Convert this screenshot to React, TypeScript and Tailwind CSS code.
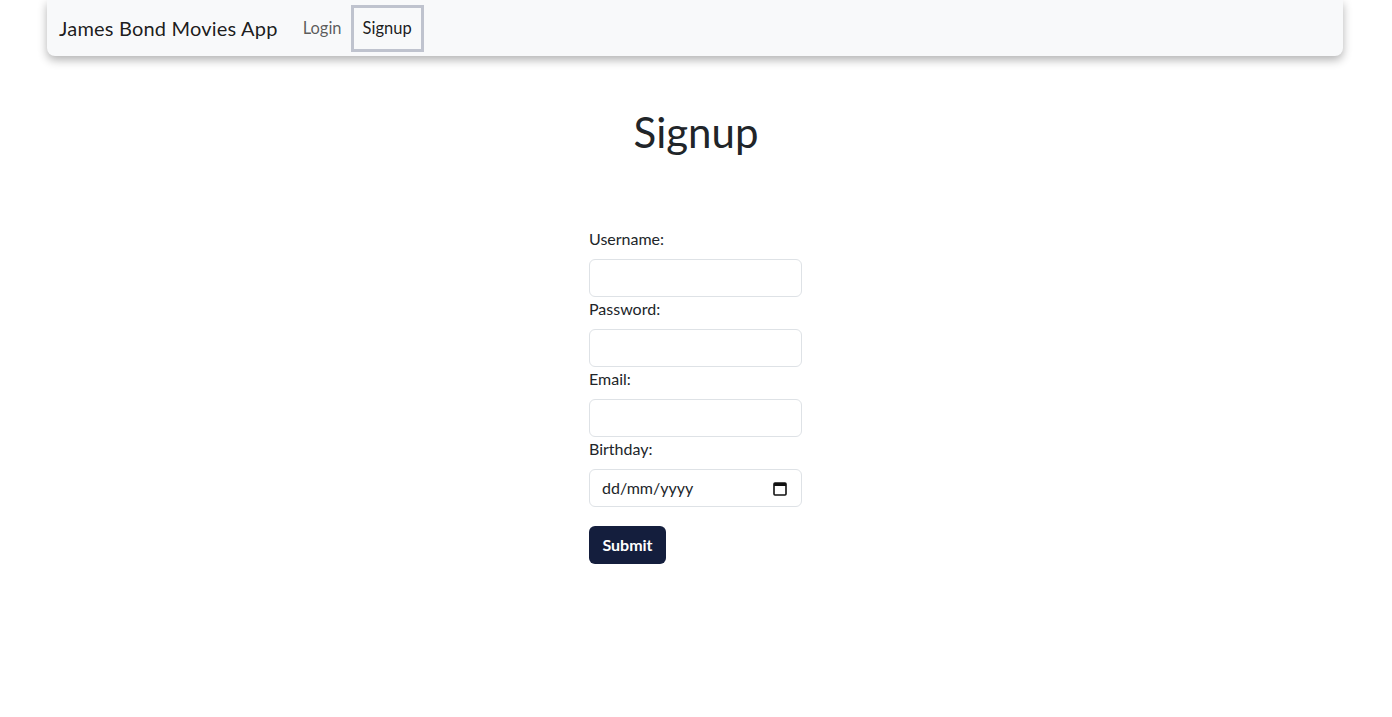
import React from "react";

const font = { fontFamily: "Lato, 'Noto Sans', sans-serif" };

function Field({ label, children }: { label: string; children: React.ReactNode }) {
  return (
    <div className="flex flex-col">
      <label className="mb-2 text-[16px] leading-6 text-[#212529]">{label}</label>
      {children}
    </div>
  );
}

function TextInput({ type = "text" }: { type?: string }) {
  return (
    <input
      type={type}
      className="h-[38px] w-full rounded-md border border-[#dee2e6] bg-white px-3 text-[16px] text-[#212529] outline-none"
    />
  );
}

export default function App() {
  return (
    <div className="min-h-screen bg-white text-[#212529]" style={font}>
      <nav className="ml-[47px] flex h-14 w-[1296px] items-center rounded-b-lg bg-[#f8f9fa] px-3 shadow-[0_4px_10px_rgba(0,0,0,0.3)]">
        <span className="mr-[25px] text-[20px] tracking-[0.2px] text-[#000000e6]">James Bond Movies App</span>
        <a className="text-[16.5px] text-[#000000a6]">Login</a>
        <a className="ml-[9px] flex h-[47px] items-center border-[3px] border-[#bfc3ce] px-[9px] text-[16.5px] text-[#000000e6]">
          Signup
        </a>
      </nav>

      <h1 className="mt-[52px] text-center text-[42px] leading-[48px] text-[#212529]">Signup</h1>

      <form className="ml-[589px] mt-[71px] flex w-[213px] flex-col">
        <Field label="Username:">
          <TextInput />
        </Field>
        <Field label="Password:">
          <TextInput type="password" />
        </Field>
        <Field label="Email:">
          <TextInput type="email" />
        </Field>
        <Field label="Birthday:">
          <div className="flex h-[38px] w-full items-center justify-between rounded-md border border-[#dee2e6] bg-white pl-3 pr-[14px] text-[16px] text-[#212529]">
            <span>dd/mm/yyyy</span>
            <svg width="14" height="15" viewBox="0 0 14 15" fill="none">
              <rect x="1" y="2" width="12" height="12" rx="1" stroke="#111" strokeWidth="1.6" />
              <rect x="1" y="2" width="12" height="3" fill="#111" />
            </svg>
          </div>
        </Field>
        <button
          type="button"
          className="mt-[19px] h-[38px] w-[77px] rounded-md bg-[#141e3d] text-[16px] font-bold text-white"
        >
          Submit
        </button>
      </form>
    </div>
  );
}
